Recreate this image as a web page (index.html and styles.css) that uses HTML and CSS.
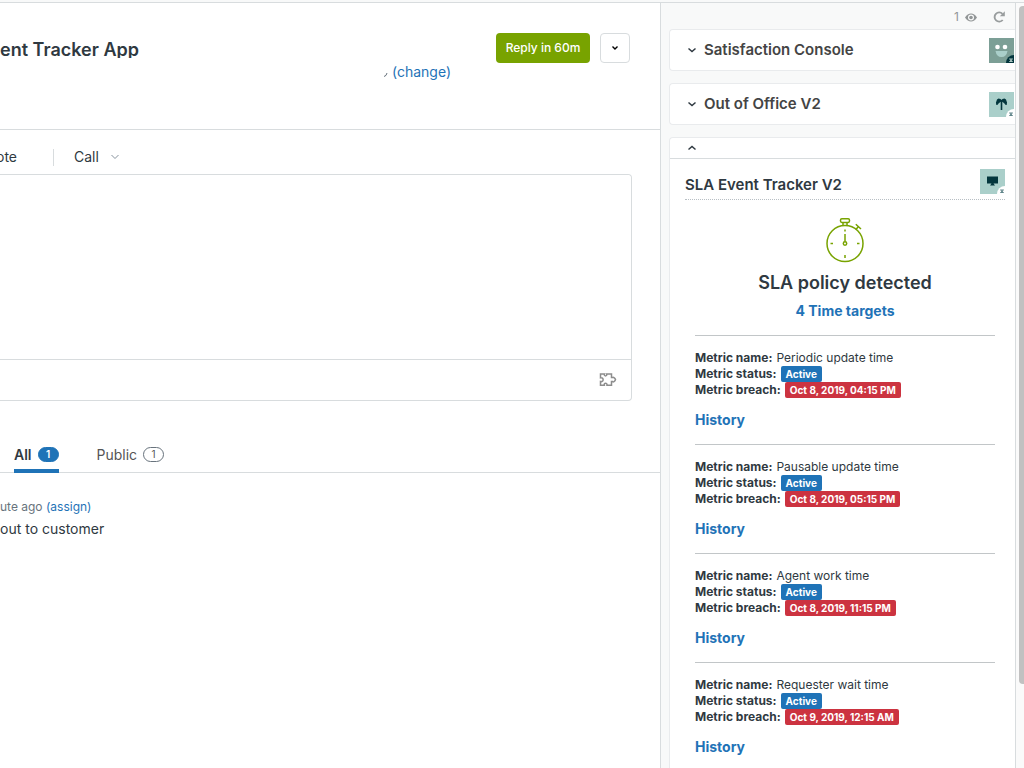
FILE: index.html
```html
<!DOCTYPE html>
<html lang="en">
<head>
<meta charset="utf-8">
<title>SLA Event Tracker App</title>
<link rel="stylesheet" href="styles.css">
</head>
<body>
<div class="workspace">
  <main class="ticket">
    <header class="ticket-header">
      <div class="ticket-info">
        <h1 class="ticket-title">ent Tracker App</h1>
        <p class="requester"><svg width="5" height="12" viewBox="0 0 5 12" aria-hidden="true"><path d="M1 10.500Q3.500 10 4 7" fill="none" stroke="#68737d"/></svg><a class="link" href="#change">(change)</a></p>
      </div>
      <button class="reply" type="button">Reply in 60m</button>
      <button class="more" type="button" aria-label="More actions"><svg width="8" height="6" viewBox="0 0 8 6" aria-hidden="true"><path d="M1.500 1.500L4 4L6.500 1.500" fill="none" stroke="#000" stroke-width="1.400"/></svg></button>
    </header>
    <nav class="channels">
      <button class="channel note" type="button">ote</button>
      <button class="channel call" type="button">Call <svg width="8" height="6" viewBox="0 0 8 6" aria-hidden="true"><path d="M.5 1L4 4.500L7.500 1" fill="none" stroke="#87929d"/></svg></button>
    </nav>
    <section class="composer">
      <textarea class="composer-text" aria-label="Comment"></textarea>
      <div class="composer-tools">
        <button class="apps" type="button" aria-label="Apps"><svg width="18" height="16" viewBox="0 0 18 16" aria-hidden="true"><path d="M1.500 2H5.500C4.500 4.500 8.500 4.500 7.700 2H12.500V5.500H13.500C14 4.500 16 6 16.500 7.500C16 9.500 14 10.500 13.500 9.500H12.500V13.200H8C8.500 10.500 4.500 10.500 5.300 13.200H1.500V9.500C5 10.500 5 5 1.500 5.800Z" fill="none" stroke="#8d8d8d" stroke-width="1.500"/></svg></button>
      </div>
    </section>
    <nav class="tabs">
      <button class="tab active" type="button">All <span class="count">1</span></button>
      <button class="tab" type="button">Public <span class="count">1</span></button>
    </nav>
    <article class="comment">
      <p class="comment-meta">ute ago <a class="link" href="#assign">(assign)</a></p>
      <p class="comment-text">out to customer</p>
    </article>
  </main>
  <aside class="sidebar">
    <div class="sidebar-tools">
      <span class="viewers">1 <svg width="12" height="9" viewBox="0 0 12 9" aria-hidden="true"><path d="M0 4.500Q2.500 .5 6 .5T12 4.500Q9.500 8.500 6 8.500T0 4.500Z" fill="#929697"/><circle cx="6" cy="4.500" r="3" fill="#f8f9f9"/><circle cx="6" cy="4.500" r="1.800" fill="#929697"/></svg></span>
      <button class="refresh" type="button" aria-label="Refresh apps"><svg width="12" height="12" viewBox="0 0 12 12" aria-hidden="true"><path d="M9.700 9A4.600 4.600 0 1 1 9.500 2.800" fill="none" stroke="#999d9e" stroke-width="1.900"/><path d="M11.800 .3V5.300H6.800Z" fill="#999d9e"/></svg></button>
    </div>
    <section class="app">
      <button class="app-toggle" type="button"><svg class="chevron" width="10" height="8" viewBox="0 0 10 8" aria-hidden="true"><path d="M1.500 2.500L5 5.500L8.500 2.500" fill="none" stroke="#2f3941" stroke-width="1.500"/></svg><span class="app-name">Satisfaction Console</span>
        <svg class="app-icon" width="25" height="25" viewBox="0 0 25 25" aria-hidden="true"><path d="M0 0H25V25H0Z" fill="#7c9f96"/><circle cx="8.500" cy="9" r="2.300" fill="#fff"/><circle cx="16" cy="9" r="2.300" fill="#fff"/><path d="M6.500 13H18.500Q17.500 19 12.500 19T6.500 13Z" fill="#aacfca"/><path d="M25 17A8 8 0 0 0 17 25H25Z" fill="#03363d"/><path d="M20.500 21H23.500L20.500 23.500H23.500Z" stroke="#a9c4c0" fill="none"/></svg></button>
    </section>
    <section class="app">
      <button class="app-toggle" type="button"><svg class="chevron" width="10" height="8" viewBox="0 0 10 8" aria-hidden="true"><path d="M1.500 2.500L5 5.500L8.500 2.500" fill="none" stroke="#2f3941" stroke-width="1.500"/></svg><span class="app-name">Out of Office V2</span>
        <svg class="app-icon" width="25" height="25" viewBox="0 0 25 25" aria-hidden="true"><path d="M0 0H25V25H0Z" fill="#aacfca"/><path d="M12.500 8Q12 6.500 9.500 6.500Q7.500 7 7.500 9Q6.500 10 7.300 13Q9 13 9.500 11.500L11.700 9.800V18H13.300V9.800L15.500 11.500Q16 13 17.700 13Q18.500 10 17.500 9Q17.500 7 15.500 6.500Q13 6.500 12.500 8Z" fill="#03363d"/><path d="M25 17A8 8 0 0 0 17 25H25Z" fill="#fff"/><path d="M20.500 21H23.500L20.500 23.500H23.500Z" stroke="#60858a" fill="none"/></svg></button>
    </section>
    <section class="app expanded">
      <button class="collapse" type="button" aria-label="Collapse"><svg width="10" height="8" viewBox="0 0 10 8" aria-hidden="true"><path d="M1.500 5.500L5 2.500L8.500 5.500" fill="none" stroke="#2f3941" stroke-width="1.500"/></svg></button>
      <div class="app-body">
        <header class="app-header">
          <h2 class="app-name dark">SLA Event Tracker V2</h2>
          <svg width="25" height="25" viewBox="0 0 25 25" aria-hidden="true"><path d="M0 0H25V25H0Z" fill="#aacfca"/><path d="M7 7.500H18V14.500H7ZM11.500 14.500H13.500L15 16.500H10Z" fill="#03363d"/><path d="M25 17A8 8 0 0 0 17 25H25Z" fill="#fff"/><path d="M20.500 21H23.500L20.500 23.500H23.500Z" stroke="#60858a" fill="none"/></svg>
        </header>
        <div class="sla">
          <div class="summary">
            <svg width="40" height="46" viewBox="0 0 40 46" aria-hidden="true" fill="none" stroke="#78a300" stroke-width="1.500"><circle cx="20" cy="26.500" r="18"/><rect x="15.500" y="1.800" width="9" height="3.700" rx="1.400"/><path d="M18 5.500V8.500M22 5.500V8.500M31 12.500L33 10M30.800 7.300L36 12M20 12.500V14.500M20 38V41M5.500 26.500H8M32 26.500H34.500M20 17V24.500"/><circle cx="20" cy="26.500" r="1.700"/></svg>
            <h3 class="summary-title">SLA policy detected</h3>
            <a class="link targets" href="#targets">4 Time targets</a>
          </div>
          <section class="metric">
            <p><b>Metric name:</b> Periodic update time</p>
            <p><b>Metric status:</b> <span class="tag">Active</span></p>
            <p><b>Metric breach:</b> <span class="tag breach">Oct 8, 2019, 04:15 PM</span></p>
            <a class="link history" href="#history-1">History</a>
          </section>
          <section class="metric">
            <p><b>Metric name:</b> Pausable update time</p>
            <p><b>Metric status:</b> <span class="tag">Active</span></p>
            <p><b>Metric breach:</b> <span class="tag breach">Oct 8, 2019, 05:15 PM</span></p>
            <a class="link history" href="#history-2">History</a>
          </section>
          <section class="metric">
            <p><b>Metric name:</b> Agent work time</p>
            <p><b>Metric status:</b> <span class="tag">Active</span></p>
            <p><b>Metric breach:</b> <span class="tag breach">Oct 8, 2019, 11:15 PM</span></p>
            <a class="link history" href="#history-3">History</a>
          </section>
          <section class="metric">
            <p><b>Metric name:</b> Requester wait time</p>
            <p><b>Metric status:</b> <span class="tag">Active</span></p>
            <p><b>Metric breach:</b> <span class="tag breach">Oct 9, 2019, 12:15 AM</span></p>
            <a class="link history" href="#history-4">History</a>
          </section>
        </div>
      </div>
    </section>
  </aside>
  <div class="scroll-track"><div class="scroll-thumb"></div></div>
</div>
</body>
</html>
```

FILE: styles.css
```css
* {
  box-sizing: border-box;
}

body {
  margin: 0;
  padding-top: 2px;
  height: 100vh;
  overflow: hidden;
  background: #f8f9f9;
  color: #2f3941;
  font: 14px/20px Inter, "Liberation Sans", sans-serif;
}

h1, h2, h3, p {
  margin: 0;
}

button {
  padding: 0;
  border: 0;
  background: none;
  color: inherit;
  font: inherit;
  cursor: pointer;
}

svg {
  flex: none;
}

.link {
  color: #1f73b7;
  text-decoration: none;
}

.workspace {
  display: flex;
  height: 100%;
  border-top: 1px solid #d8dcde;
}

.ticket {
  flex: 1;
  min-width: 0;
  background: #fff;
}

.ticket-header {
  display: flex;
  align-items: flex-start;
  gap: 10px;
  height: 127px;
  padding: 30px 30px 0 0;
  border-bottom: 1px solid #d8dcde;
}

.ticket-info {
  flex: 1;
}

.ticket-title {
  height: 25px;
  padding-top: 5px;
  overflow: hidden;
  font-size: 18px;
  line-height: 24px;
  font-weight: 600;
}

.requester {
  display: flex;
  justify-content: flex-end;
  align-items: center;
  gap: 4px;
  padding: 4px 35px 0 0;
}

.reply {
  width: 94px;
  height: 30px;
  border-radius: 4px;
  background: #78a300;
  color: #fff;
  font-size: 12px;
  font-weight: 500;
}

.more {
  display: flex;
  align-items: center;
  justify-content: center;
  width: 30px;
  height: 30px;
  border: 1px solid #d8dcde;
  border-radius: 4px;
}

.channels {
  display: flex;
  align-items: center;
  height: 44px;
  padding-top: 10px;
}

.channel {
  display: flex;
  align-items: center;
  height: 17px;
}

.note {
  justify-content: flex-end;
  width: 54px;
  padding-right: 36px;
  border-right: 1px solid #d8dcde;
}

.call {
  gap: 12px;
  padding-left: 20px;
}

.composer {
  margin-right: 28px;
  border: 1px solid #d8dcde;
  border-left: 0;
  border-radius: 0 4px 4px 0;
}

.composer-text {
  display: block;
  width: 100%;
  height: 184px;
  border: 0;
  border-radius: 4px;
  outline: 0;
  resize: none;
  font: inherit;
}

.composer-tools {
  display: flex;
  align-items: center;
  justify-content: flex-end;
  height: 41px;
  padding-right: 14px;
  border-top: 1px solid #d8dcde;
}

.apps {
  display: flex;
}

.tabs {
  display: flex;
  gap: 38px;
  height: 72px;
  padding: 39px 0 0 14px;
  border-bottom: 1px solid #d8dcde;
}

.tab {
  display: flex;
  align-items: center;
  gap: 6px;
  height: 33px;
  border-bottom: 4px solid transparent;
  color: #555;
}

.tab.active {
  border-color: #1f73b7;
  color: #2f3941;
  font-weight: 600;
}

.count {
  width: 21px;
  height: 15px;
  border: 1px solid #68737d;
  border-radius: 8px;
  font-size: 10px;
  line-height: 13px;
}

.active .count {
  border-color: #1f73b7;
  background: #1f73b7;
  color: #fff;
}

.comment {
  padding-top: 24px;
}

.comment-meta {
  color: #68737d;
  font-size: 12px;
}

.comment-text {
  padding-top: 2px;
}

.sidebar {
  display: flex;
  flex: none;
  flex-direction: column;
  gap: 12px;
  width: 356px;
  padding-left: 8px;
  overflow: hidden;
  border: solid #d8dcde;
  border-width: 0 1px;
}

.sidebar-tools {
  display: flex;
  flex: none;
  align-items: center;
  justify-content: flex-end;
  gap: 16px;
  height: 26px;
  margin-bottom: -12px;
  padding: 2px 10px 0 0;
}

.viewers {
  display: flex;
  align-items: center;
  gap: 6px;
  color: #929697;
  font-size: 12px;
}

.refresh {
  display: flex;
}

.app {
  flex: none;
  border: 1px solid #e9ebed;
  border-right: 0;
  border-radius: 4px 0 0 4px;
  background: #fff;
}

.app-toggle {
  display: flex;
  align-items: center;
  gap: 7px;
  width: 100%;
  height: 40px;
  padding: 0 1px 0 17px;
  color: #444;
  text-align: left;
}

.app-name {
  flex: 1;
  font-size: 15px;
  font-weight: 600;
}

.dark {
  padding-top: 6px;
  color: #2f3941;
}

.collapse {
  display: flex;
  align-items: center;
  width: 100%;
  height: 20px;
  padding-left: 17px;
}

.app-body {
  padding: 10px 10px 0 15px;
  border-top: 1px solid #d8dcde;
}

.app-header {
  display: flex;
  padding-bottom: 4px;
  border-bottom: 1px dotted #b8bfc4;
}

.sla {
  padding: 17px 10px 0;
  font-size: 12px;
  line-height: 16px;
}

.summary {
  display: flex;
  flex-direction: column;
  align-items: center;
  height: 118px;
}

.summary-title {
  padding-top: 8px;
  font-size: 18px;
  line-height: 24px;
  font-weight: 600;
}

.targets {
  padding-top: 6px;
  font-size: 14px;
  line-height: 20px;
  font-weight: 700;
}

.metric {
  padding: 14px 0;
  border-top: 1px solid #c2c6c8;
}

.metric p {
  display: flex;
  gap: 4px;
  white-space: nowrap;
}

.metric b {
  font-weight: 700;
}

.tag {
  padding: 0 5px;
  border-radius: 2px;
  background: #1f73b7;
  color: #fff;
  font-size: 10px;
  font-weight: 700;
}

.breach {
  background: #cc3340;
}

.history {
  display: inline-block;
  margin-top: 12px;
  font-size: 14px;
  line-height: 20px;
  font-weight: 700;
  vertical-align: top;
}

.scroll-track {
  flex: none;
  width: 8px;
  padding: 3px 0 0 3px;
  background: #fafafa;
}

.scroll-thumb {
  height: 89%;
  border-radius: 4px 0 0 4px;
  background: #c1c1c1;
}
```
